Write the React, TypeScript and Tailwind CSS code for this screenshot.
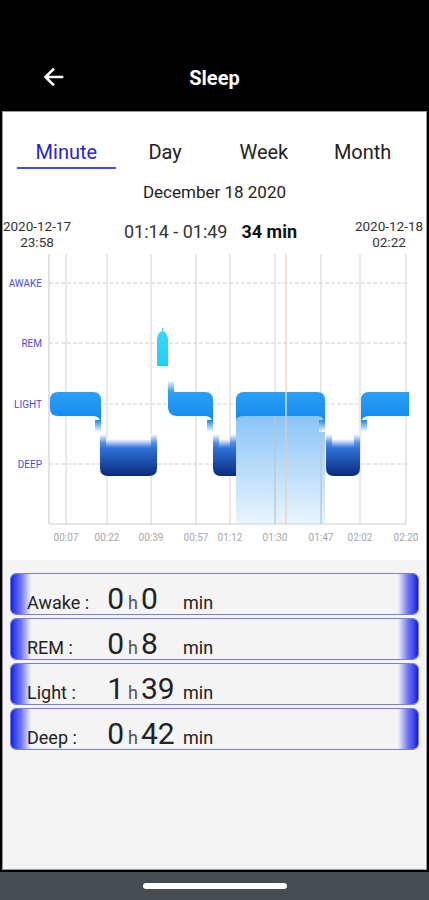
import React from "react";

const font = { fontFamily: "Roboto, 'Noto Sans', Arial, sans-serif" };

function Chart() {
  const vx = [66, 107, 151, 196, 230, 275, 321, 360, 406];
  const xl = ["00:07", "00:22", "00:39", "00:57", "01:12", "01:30", "01:47", "02:02", "02:20"];
  const hy = [
    { y: 34, t: "AWAKE" },
    { y: 94, t: "REM" },
    { y: 155, t: "LIGHT" },
    { y: 215, t: "DEEP" },
  ];
  const LT = 143;
  const LB = 167;
  const DT = 199;
  const DB = 227;
  const deep = (x1: number, x2: number, rl: boolean, rr: boolean) => (
    <g>
      <path
        d={`M${x1} ${DT} V${rl ? DB - 8 : DB} ${rl ? `Q${x1} ${DB} ${x1 + 8} ${DB}` : ""} H${rr ? x2 - 8 : x2} ${rr ? `Q${x2} ${DB} ${x2} ${DB - 8}` : ""} V${DT} Z`}
        fill="url(#deep)"
      />
      <rect x={x1} y={DT - 9} width={x2 - x1} height="9" fill="url(#deepfade)" />
      <rect x={x1} y={DT - 14} width="6" height="14" fill="url(#deepfade2)" />
      <rect x={x2 - 6} y={DT - 14} width="6" height="14" fill="url(#deepfade2)" />
    </g>
  );
  return (
    <svg width="429" height="305" viewBox="0 0 429 305" className="block">
      <defs>
        <linearGradient id="light" x1="0" y1="0" x2="0" y2="1">
          <stop offset="0" stopColor="#28a0f8" />
          <stop offset="1" stopColor="#1688ec" />
        </linearGradient>
        <linearGradient id="deep" x1="0" y1="0" x2="0" y2="1">
          <stop offset="0" stopColor="#2f72da" />
          <stop offset="1" stopColor="#0a2b7c" />
        </linearGradient>
        <linearGradient id="deepfade" x1="0" y1="0" x2="0" y2="1">
          <stop offset="0" stopColor="#ffffff" />
          <stop offset="1" stopColor="#2f72da" />
        </linearGradient>
        <linearGradient id="deepfade2" x1="0" y1="0" x2="0" y2="1">
          <stop offset="0" stopColor="#ffffff" />
          <stop offset="0.6" stopColor="#5b93e4" />
          <stop offset="1" stopColor="#2f72da" />
        </linearGradient>
        <linearGradient id="lightfade" x1="0" y1="0" x2="0" y2="1">
          <stop offset="0" stopColor="#1688ec" />
          <stop offset="1" stopColor="#ffffff" />
        </linearGradient>
        <linearGradient id="lightup" x1="0" y1="1" x2="0" y2="0">
          <stop offset="0" stopColor="#28a0f8" />
          <stop offset="1" stopColor="#ffffff" />
        </linearGradient>
        <linearGradient id="rem" x1="0" y1="0" x2="0" y2="1">
          <stop offset="0" stopColor="#3ad8ff" />
          <stop offset="0.75" stopColor="#00c8fb" />
          <stop offset="1" stopColor="#ffffff" />
        </linearGradient>
        <linearGradient id="hl" x1="0" y1="0" x2="0" y2="1">
          <stop offset="0" stopColor="#86c3f7" />
          <stop offset="1" stopColor="#eaf5fe" />
        </linearGradient>
      </defs>

      {/* highlight */}
      <path d={`M236 ${LB - 4} H325 V275 H236 Z`} fill="url(#hl)" />

      {/* horizontal dashed grid */}
      {hy.map((h) => (
        <line key={h.t} x1="49" x2="407" y1={h.y} y2={h.y} stroke="#cfcfcf" strokeWidth="1" strokeDasharray="4 2" />
      ))}
      {/* vertical grid */}
      {vx.map((x) => (
        <line key={x} x1={x} x2={x} y1="5" y2="275" stroke="#d2d2d2" strokeWidth="1" />
      ))}
      <line x1="49" x2="49" y1="5" y2="275" stroke="#cfcfcf" strokeWidth="1.2" />
      <line x1="49" x2="407" y1="275" y2="275" stroke="#cfcfcf" strokeWidth="1.2" />

      {/* light seg 1 + tail */}
      <path d={`M58 ${LT} H93 Q101 ${LT} 101 ${LT + 8} V${LB + 6} Q99 ${LB} 93 ${LB} H58 Q50 ${LB} 50 ${LB - 8} V${LT + 8} Q50 ${LT} 58 ${LT} Z`} fill="url(#light)" />
      <rect x="95" y={LB + 4} width="6" height="12" fill="url(#lightfade)" />
      {deep(100, 157, true, true)}

      {/* REM */}
      <path d={`M157 ${DT - 14} V91 Q157 84 162 82 L162 79 L163 79 L163 82 Q168 84 168 91 V117 H157 Z`} fill="url(#rem)" />

      {/* light seg 2 */}
      <rect x="168" y={LT - 12} width="6" height="12" fill="url(#lightup)" />
      <path d={`M168 ${LT} H205 Q213 ${LT} 213 ${LT + 8} V${LB + 6} Q211 ${LB} 205 ${LB} H177 Q169 ${LB} 168 ${LB - 8} Z`} fill="url(#light)" />
      <rect x="207" y={LB + 4} width="6" height="12" fill="url(#lightfade)" />
      {deep(213, 236, true, false)}

      {/* light seg 3 */}
      <path d={`M236 ${LB + 4} V${LT + 8} Q236 ${LT} 244 ${LT} H317 Q325 ${LT} 325 ${LT + 8} V${LB + 6} Q323 ${LB} 317 ${LB} H244 Q237 ${LB} 236 ${LB + 4} Z`} fill="url(#light)" />
      <rect x="319" y={LB + 4} width="6" height="12" fill="url(#lightfade)" />
      {deep(326, 360, true, true)}
      {/* light seg 4 */}
      <path d={`M361 ${LB + 6} V${LT + 8} Q361 ${LT} 369 ${LT} H409 V${LB} H369 Q362 ${LB} 361 ${LB + 6} Z`} fill="url(#light)" />
      <rect x="361" y={LB + 4} width="6" height="12" fill="url(#lightfade)" />

      {/* grid lines visible through highlight */}
      <line x1="275" x2="275" y1={LB} y2="275" stroke="#9ab9d6" strokeWidth="0.8" opacity="0.7" />
      <line x1="321" x2="321" y1={LB} y2="275" stroke="#9ab9d6" strokeWidth="0.8" opacity="0.7" />
      <line x1="286" x2="286" y1="5" y2="275" stroke="#f5c6a5" strokeWidth="1" />
      <line x1="286" x2="286" y1={LT} y2={LB} stroke="#cfe6fb" strokeWidth="1" />

      {/* y labels */}
      {hy.map((h) => (
        <text key={h.t} x="42" y={h.y + 4} textAnchor="end" fontSize="10" fill="#4a4ae6" style={font}>
          {h.t}
        </text>
      ))}
      {/* x labels */}
      {xl.map((t, i) => (
        <text key={t} x={vx[i]} y="292" textAnchor="middle" fontSize="10" fill="#a6a6a6" style={font}>
          {t}
        </text>
      ))}
    </svg>
  );
}

function Row({ label, h, m }: { label: string; h: string; m: string }) {
  return (
    <div className="relative h-[42px] rounded-[6px] border border-[#7b7be6] bg-[#f4f4f4] overflow-hidden">
      <div className="absolute left-0 top-0 bottom-0 w-[20px] bg-gradient-to-r from-[#1212e6] via-[#7272f0] to-[#f4f4f4]" />
      <div className="absolute right-0 top-0 bottom-0 w-[20px] bg-gradient-to-l from-[#1212e6] via-[#7272f0] to-[#f4f4f4]" />
      <div className="relative flex items-baseline h-full pt-[10px] pl-[16px] text-[#222]">
        <span className="w-[78px] text-[18px] leading-none">{label}</span>
        <span className="w-[19px] text-right text-[30px] leading-none">{h}</span>
        <span className="w-[17px] pl-[4px] text-[18px] leading-none text-[#555]">h</span>
        <span className="w-[42px] text-[30px] leading-none">{m}</span>
        <span className="text-[18px] leading-none">min</span>
      </div>
    </div>
  );
}

export default function App() {
  return (
    <div className="w-[429px] h-[900px] bg-black flex flex-col overflow-hidden" style={font}>
      <div className="h-[111px] shrink-0 flex items-end pb-[23px] relative">
        <div className="absolute left-[42px] top-[66px]">
          <svg width="22" height="22" viewBox="0 0 22 22">
            <path d="M20 11H4M11 3.5L3.5 11L11 18.5" stroke="white" strokeWidth="2.6" fill="none" strokeLinecap="square" />
          </svg>
        </div>
        <div className="w-full text-center text-white font-bold text-[20px] leading-none">Sleep</div>
      </div>
      <div className="flex-1 mx-[2px] mb-[2px] border border-[#9a9a9a] flex flex-col bg-[#f4f4f4]">
        <div className="bg-white flex flex-col h-[448px]">
          <div className="grid grid-cols-4 px-[14px] pt-[30px]">
            <div className="flex flex-col items-center">
              <span className="text-[20px] leading-none text-[#2424e0]">Minute</span>
              <div className="mt-[5px] h-[2px] w-full bg-[#4a4aee]" />
            </div>
            <span className="text-center text-[20px] leading-none text-[#222]">Day</span>
            <span className="text-center text-[20px] leading-none text-[#222]">Week</span>
            <span className="text-center text-[20px] leading-none text-[#222]">Month</span>
          </div>
          <div className="mt-[15px] text-center text-[17px] leading-none text-[#222]">December 18 2020</div>
          <div className="mt-[17px] flex items-start text-[#333]">
            <div className="w-[72px] -ml-[2px] flex flex-col items-center text-[13.5px] leading-[16px]">
              <span>2020-12-17</span>
              <span>23:58</span>
            </div>
            <div className="flex-1 flex justify-center items-baseline pt-[5px] pr-[4px] text-[18px] leading-none">
              <span>01:14 - 01:49</span>
              <span className="ml-[14px] font-bold text-[#111]">34 min</span>
            </div>
            <div className="w-[74px] flex flex-col items-center text-[13.5px] leading-[16px]">
              <span>2020-12-18</span>
              <span>02:22</span>
            </div>
          </div>
          <div className="-mt-[1px] -ml-[3px]">
            <Chart />
          </div>
        </div>
        <div className="flex flex-col gap-[3px] px-[7px] pt-[13px]">
          <Row label="Awake :" h="0" m="0" />
          <Row label="REM :" h="0" m="8" />
          <Row label="Light :" h="1" m="39" />
          <Row label="Deep :" h="0" m="42" />
        </div>
      </div>
      <div className="h-[28px] shrink-0 bg-[#474c50] flex items-center justify-center">
        <div className="w-[144px] h-[6px] rounded-full bg-white" />
      </div>
    </div>
  );
}
